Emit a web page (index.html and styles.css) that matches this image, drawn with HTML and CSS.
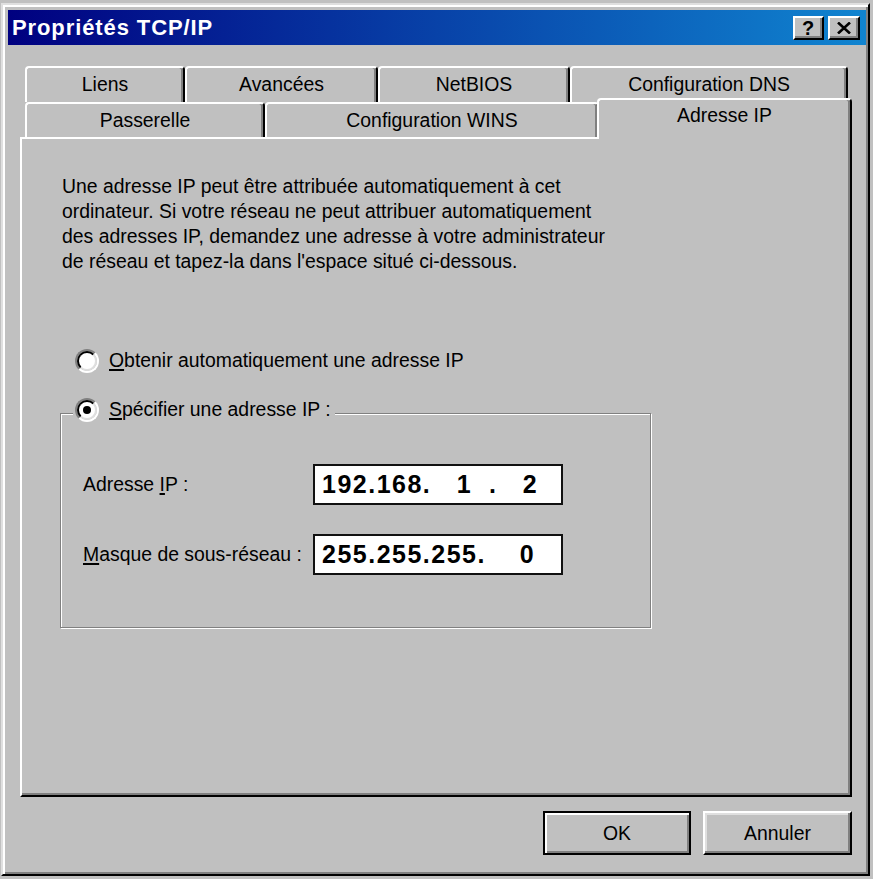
FILE: index.html
```html
<!DOCTYPE html>
<html lang="fr">
<head>
<meta charset="utf-8">
<title>Propriétés TCP/IP</title>
<link rel="stylesheet" href="styles.css">
</head>
<body>
<div class="window">
  <div class="titlebar">
    <div class="title">Propriétés TCP/IP</div>
    <div class="tbtns">
      <div class="tbtn help">?</div>
      <div class="tbtn close">
        <svg width="14" height="12" viewBox="0 0 14 12"><path d="M1 0.5 L13 11.5 M13 0.5 L1 11.5" stroke="#000" stroke-width="2.6" fill="none"/></svg>
      </div>
    </div>
  </div>

  <div class="tabs">
    <div class="tabrow back">
      <div class="tab w-liens">Liens</div>
      <div class="tab w-avancees">Avancées</div>
      <div class="tab w-netbios">NetBIOS</div>
      <div class="tab w-dns">Configuration DNS</div>
    </div>
    <div class="tabrow front">
      <div class="tab w-passerelle">Passerelle</div>
      <div class="tab w-wins">Configuration WINS</div>
      <div class="tab selected w-ip">Adresse IP</div>
    </div>
  </div>

  <div class="panel">
    <p class="intro">Une adresse IP peut être attribuée automatiquement à cet<br>ordinateur. Si votre réseau ne peut attribuer automatiquement<br>des adresses IP, demandez une adresse à votre administrateur<br>de réseau et tapez-la dans l'espace situé ci-dessous.</p>

    <div class="radiorow first">
      <span class="radio"><span class="radio-in"></span></span>
      <span class="rlabel"><u>O</u>btenir automatiquement une adresse IP</span>
    </div>

    <fieldset class="group">
      <legend class="legend">
        <span class="radiorow inline">
          <span class="radio"><span class="radio-in"><span class="dot"></span></span></span>
          <span class="rlabel"><u>S</u>pécifier une adresse IP :</span>
        </span>
      </legend>
      <div class="field-row">
        <span class="flabel">Adresse <u>I</u>P :</span>
        <span class="ipbox">192.168.   1  .   2</span>
      </div>
      <div class="field-row">
        <span class="flabel"><u>M</u>asque de sous-réseau :</span>
        <span class="ipbox">255.255.255.    0</span>
      </div>
    </fieldset>
  </div>

  <div class="footer">
    <div class="btn default w-ok">OK</div>
    <div class="btn w-cancel">Annuler</div>
  </div>
</div>
</body>
</html>
```

FILE: styles.css
```css
* { box-sizing: border-box; }

html, body {
  margin: 0;
  padding: 0;
}

body {
  width: 873px;
  height: 879px;
  overflow: hidden;
  background: #c0c0c0;
  font-family: "Liberation Sans", Arial, sans-serif;
  font-size: 19.4px;
  line-height: 25px;
  color: #000;
}

u {
  text-decoration-thickness: 1.5px;
  text-underline-offset: 2px;
}

.window {
  margin: 3px 0 0 1px;
  width: 869px;
  height: 873px;
  background: #c0c0c0;
  border: 2px solid;
  border-color: #dfdfdf #000 #000 #dfdfdf;
  box-shadow: inset 2px 2px 0 #fff, inset -2px -2px 0 #808080;
  padding: 5px 2px 0 5px;
  display: flex;
  flex-direction: column;
}

/* ---------- title bar ---------- */
.titlebar {
  height: 35px;
  flex: none;
  display: flex;
  align-items: center;
  background: linear-gradient(90deg, #000080 0%, #1084d0 100%);
  padding: 0 6px 0 4px;
}

.title {
  flex: 1;
  color: #fff;
  font-weight: bold;
  font-size: 22px;
  letter-spacing: 0.9px;
  line-height: 35px;
}

.tbtns {
  display: flex;
  gap: 4px;
}

.tbtn {
  width: 31px;
  height: 24px;
  background: #c0c0c0;
  border: 2px solid;
  border-color: #fff #000 #000 #fff;
  box-shadow: inset -2px -2px 0 #808080;
  display: flex;
  align-items: center;
  justify-content: center;
}

.tbtn.help {
  font-weight: bold;
  font-size: 20px;
  line-height: 20px;
  padding-right: 1px;
}

.tbtn.close { width: 32px; }

/* ---------- tabs ---------- */
.tabs {
  margin: 21px 14px 0 12px;
  flex: none;
}

.tabrow {
  display: flex;
  padding-left: 5px;
}

.tabrow.back { height: 36px; }

.tabrow.front {
  height: 35px;
  align-items: flex-end;
}

.tab {
  height: 36px;
  flex: none;
  background: #c0c0c0;
  border: 2px solid;
  border-bottom: 0;
  border-color: #fff #000 transparent #fff;
  border-radius: 4px 4px 0 0;
  box-shadow: inset -2px 0 0 #808080;
  text-align: center;
  padding-top: 4px;
  white-space: nowrap;
}

.tabrow.front .tab { height: 35px; }

.tab.selected {
  position: relative;
  z-index: 2;
  margin-top: -4px;
  margin-bottom: -2px;
  margin-left: -2px;
  padding-top: 3px;
}

.w-liens { width: 160px; }
.w-avancees { width: 193px; }
.w-netbios { width: 192px; }
.w-dns { width: 278px; }
.w-passerelle { width: 240px; }
.w-wins { width: 334px; }
.tabrow.front .tab.w-ip { width: 255px; height: 41px; }

/* ---------- panel ---------- */
.panel {
  position: relative;
  z-index: 1;
  margin: 0 14px 0 12px;
  height: 660px;
  flex: none;
  border: 2px solid;
  border-color: #fff #000 #000 #fff;
  box-shadow: inset -2px -2px 0 #808080;
  padding: 35px 0 0 40px;
}

.intro {
  margin: 0;
  white-space: nowrap;
}

.radiorow {
  display: flex;
  align-items: center;
  gap: 10px;
  height: 25px;
  white-space: nowrap;
}

.radiorow.first {
  margin: 74px 0 0 13px;
}

.radiorow.inline {
  display: inline-flex;
  vertical-align: top;
}

.radio {
  width: 24px;
  height: 24px;
  flex: none;
  border-radius: 50%;
  border: 2px solid;
  border-color: #808080 #fff #fff #808080;
}

.radio-in {
  display: flex;
  align-items: center;
  justify-content: center;
  width: 100%;
  height: 100%;
  border-radius: 50%;
  border: 2px solid;
  border-color: #000 #dfdfdf #dfdfdf #000;
  background: #fff;
}

.dot {
  width: 8px;
  height: 8px;
  border-radius: 50%;
  background: #000;
}

/* ---------- group box ---------- */
.group {
  margin: 24px 0 0 -2px;
  width: 591px;
  min-width: 0;
  border: 1px solid #808080;
  box-shadow: inset 1px 1px 0 #fff, 1px 1px 0 #fff;
  padding: 35px 0 52px 22px;
}

.legend {
  margin-left: -10px;
  padding: 0 4px 7px 2px;
  background: #c0c0c0;
  line-height: 25px;
}

.field-row {
  display: flex;
  align-items: center;
  height: 41px;
}

.field-row + .field-row { margin-top: 29px; }

.flabel {
  width: 230px;
  flex: none;
  white-space: nowrap;
}

.ipbox {
  width: 250px;
  height: 41px;
  flex: none;
  background: #fff;
  border: 2px solid #111;
  padding-left: 7px;
  font-weight: bold;
  font-size: 25px;
  letter-spacing: 1.5px;
  line-height: 37px;
  white-space: pre;
}

/* ---------- footer buttons ---------- */
.footer {
  display: flex;
  justify-content: flex-end;
  gap: 12px;
  margin: 14px 14px 0 0;
}

.btn {
  height: 44px;
  background: #c0c0c0;
  border: 2px solid;
  border-color: #fff #000 #000 #fff;
  box-shadow: inset -2px -2px 0 #808080, inset 2px 2px 0 #dfdfdf;
  display: flex;
  align-items: center;
  justify-content: center;
}

.btn.default {
  border-color: #000;
  box-shadow: inset 2px 2px 0 #fff, inset -2px -2px 0 #808080;
}

.w-ok { width: 148px; }
.w-cancel { width: 149px; }
```
